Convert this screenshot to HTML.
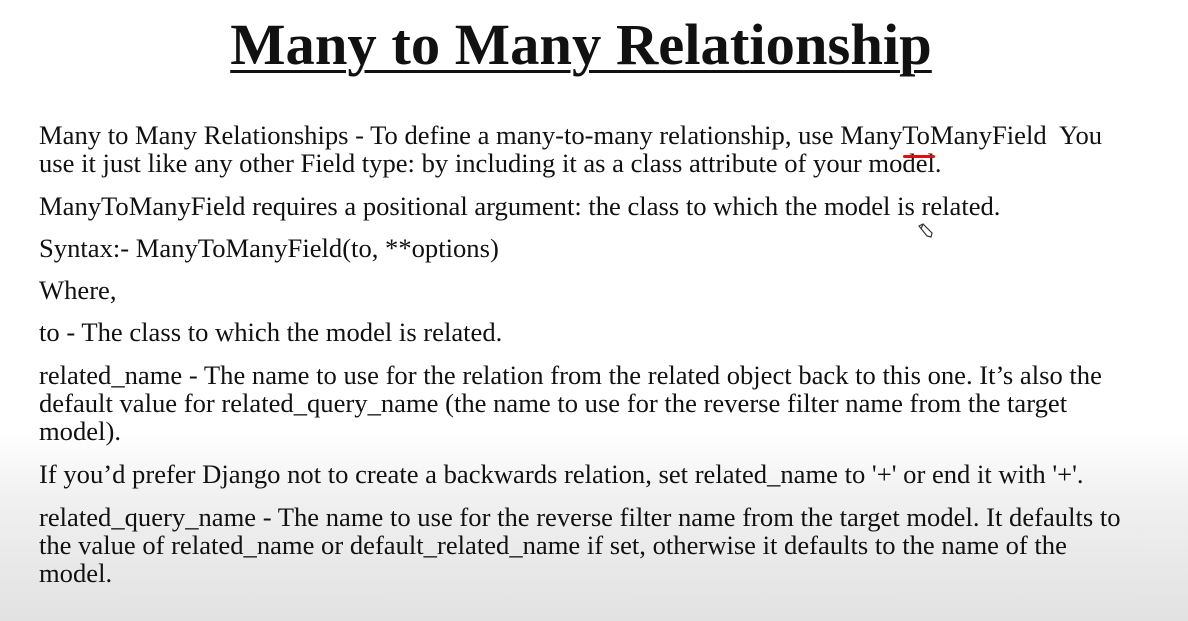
<!DOCTYPE html>
<html><head><meta charset="utf-8"><style>
html,body{margin:0;padding:0}
body{width:1188px;height:621px;overflow:hidden;position:relative;
background:linear-gradient(to bottom,#fff 0px,#fff 430px,#f0f0f0 500px,#e2e2e2 621px);
font-family:"Liberation Serif",serif;color:#111}
.t{position:absolute;left:0;width:1162px;text-align:center;top:10px;font-size:58.6px;font-weight:bold;text-decoration:underline;text-decoration-thickness:3px;text-underline-offset:6px;line-height:70px}
.l{position:absolute;left:39px;font-size:26.6px;line-height:28px;white-space:nowrap}
.red{position:absolute;left:903px;top:155px;width:32px;height:3px;background:#e01010;border-radius:2px}
</style></head><body>
<div class="t">Many to Many Relationship</div>
<div class="l" style="top:121px">Many to Many Relationships - To define a many-to-many relationship, use ManyToManyField&nbsp; You</div>
<div class="l" style="top:149px">use it just like any other Field type: by including it as a class attribute of your model.</div>
<div class="red"></div>
<div class="l" style="top:192px">ManyToManyField requires a positional argument: the class to which the model is related.</div>
<svg style="position:absolute;left:917px;top:223px" width="18" height="16" viewBox="0 0 18 16"><path d="M2 3 L6 1 L15 10 L14 14 L10 13 Z M6 1 L4 6" fill="#fff" stroke="#333" stroke-width="1.2"/></svg>
<div class="l" style="top:234px">Syntax:- ManyToManyField(to, **options)</div>
<div class="l" style="top:276px">Where,</div>
<div class="l" style="top:318px">to - The class to which the model is related.</div>
<div class="l" style="top:361px">related_name - The name to use for the relation from the related object back to this one. It’s also the</div>
<div class="l" style="top:389px">default value for related_query_name (the name to use for the reverse filter name from the target</div>
<div class="l" style="top:417px">model).</div>
<div class="l" style="top:460px">If you’d prefer Django not to create a backwards relation, set related_name to '+' or end it with '+'.</div>
<div class="l" style="top:503px">related_query_name - The name to use for the reverse filter name from the target model. It defaults to</div>
<div class="l" style="top:531px">the value of related_name or default_related_name if set, otherwise it defaults to the name of the</div>
<div class="l" style="top:559px">model.</div>
</body></html>
